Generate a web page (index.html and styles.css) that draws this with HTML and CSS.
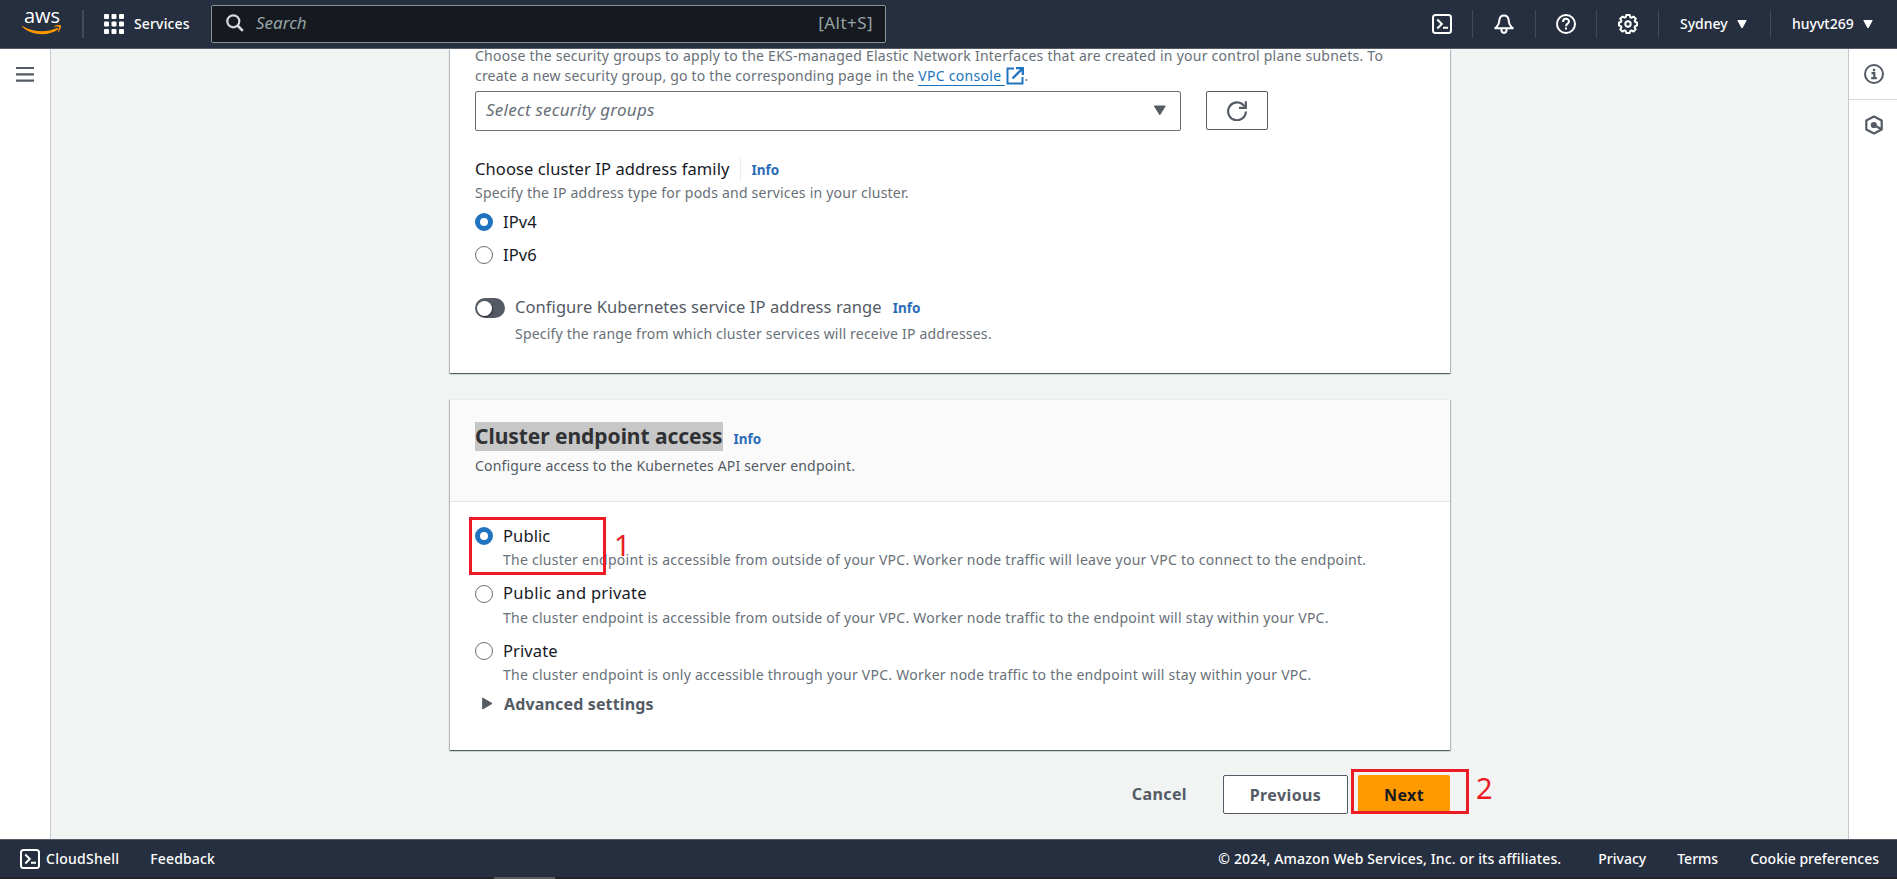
FILE: index.html
```html
<!DOCTYPE html>
<html lang="en">
<head>
<meta charset="utf-8">
<title>Configure cluster networking</title>
<link rel="stylesheet" href="styles.css">
</head>
<body>
<header class="topbar">
  <div class="logo">
    <span class="logo-text">aws</span>
    <svg class="logo-smile" viewBox="0 0 40 11" width="40" height="11"><path d="M0.6 1.2C11 7 24 8 34.5 3.2c1.4-.6 2.2.7 1 1.6C26 11.400 10 10.700.3 2c-.5-.5-.2-1.100.3-.8z" fill="#f90"/><path d="M31.800 1.400C34.300-.2 38.300-.2 38.800.5c.5.800-.3 4.300-2.400 6.400-.3.300-.7.200-.5-.3.500-1.200 1.500-3.900 1-4.600-.5-.700-3.300-.4-4.700-.2-.5 0-.7-.1-.4-.4z" fill="#f90"/></svg>
  </div>
  <span class="bar-line logo-line"></span>
  <div class="services">
    <svg width="20" height="20" viewBox="0 0 20 20" fill="#fff"><rect width="5" height="5" rx="1"/><rect x="7.500" width="5" height="5" rx="1"/><rect x="15" width="5" height="5" rx="1"/><rect y="7.500" width="5" height="5" rx="1"/><rect x="7.500" y="7.500" width="5" height="5" rx="1"/><rect x="15" y="7.500" width="5" height="5" rx="1"/><rect y="15" width="5" height="5" rx="1"/><rect x="7.500" y="15" width="5" height="5" rx="1"/><rect x="15" y="15" width="5" height="5" rx="1"/></svg>
    <span class="bar-text">Services</span>
  </div>
  <div class="search">
    <svg width="18" height="18" viewBox="0 0 18 18" fill="none" stroke="#d5dbdb" stroke-width="2.200"><circle cx="7.300" cy="7.300" r="6"/><path d="M11.500 11.500 16.800 16.800" stroke-width="2.600"/></svg>
    <span class="search-hint">Search</span>
    <span class="search-key">[Alt+S]</span>
  </div>
  <nav class="tools">
    <span class="tool t1"><svg width="20" height="20" viewBox="0 0 20 20" fill="none" stroke="#fff" stroke-width="2"><rect x="1" y="1" width="18" height="18" rx="2.500"/><path d="M5.300 5.500 9.800 10l-4.500 4.500M11 13.800h5"/></svg></span>
    <span class="tool t2"><svg width="20" height="20" viewBox="0 0 20 20" fill="none" stroke="#fff" stroke-width="2" stroke-linejoin="round"><path d="M1.200 14.200C4 12 5 10 5.300 6.500 5.600 3 7.500 1.500 10 1.500s4.400 1.500 4.700 5c.3 3.500 1.300 5.500 4.100 7.700z"/><path d="M7.300 15c0 5.200 5.400 5.200 5.400 0"/></svg></span>
    <span class="tool t3"><svg width="20" height="20" viewBox="0 0 20 20" fill="none" stroke="#fff" stroke-width="2"><circle cx="10" cy="10" r="9"/><path d="M7 8c0-4.200 6-4 6-.6 0 2.300-3 2.200-3 4.900M10 13.500v2"/></svg></span>
    <span class="tool t4"><svg width="20" height="20" viewBox="0 0 20 20" fill="none" stroke="#fff" stroke-width="2" stroke-linejoin="round"><path d="M8.300 1h3.400l.6 2.200 1.300.5 2-1.100 2.200 2.200-1.100 2 .5 1.200 1.800.5v3.100l-1.900.6-.5 1.200 1.100 2-2.200 2.100-2-1-1.200.4-.6 2.100H8.300l-.6-2.100-1.200-.5-2.100 1.100-2.200-2.100 1.200-2-.5-1.300L1 11.600V8.500L2.900 8l.5-1.200-1.200-2 2.200-2.200 2.100 1.100 1.200-.5z"/><circle cx="10" cy="10" r="2.700"/></svg></span>
    <span class="tool t5"><span class="bar-text">Sydney</span><svg width="10" height="9" viewBox="0 0 10 9"><path d="M.8.500h8.400L5 8z" fill="#fff" stroke="#fff" stroke-linejoin="round"/></svg></span>
    <span class="tool t6"><span class="bar-text user">huyvt269</span><svg width="10" height="9" viewBox="0 0 10 9"><path d="M.8.500h8.400L5 8z" fill="#fff" stroke="#fff" stroke-linejoin="round"/></svg></span>
  </nav>
</header>

<div class="body">
  <aside class="rail rail-left">
    <svg width="18" height="17" viewBox="0 0 18 17" stroke="#545b64" stroke-width="2.200"><path d="M0 2h18M0 8.300h18M0 14.600h18"/></svg>
  </aside>
  <main class="main">
    <section class="card card-net">
      <p class="hint groups-hint"><span class="g1">Choose the security groups to apply to the EKS-managed Elastic Network Interfaces that are created in your control plane subnets. To</span><br><span class="g2">create a new security group, go to the corresponding page in the </span><a class="link">VPC console</a><svg class="ext" width="18" height="18" viewBox="0 0 18 18" fill="none" stroke="#2074bf" stroke-width="2"><path d="M8 1.500H1.500v15h15V10"/><path d="M10 1.200h6.800V8M16.500 1.500 6.500 11.500" stroke-width="2.300"/></svg>.</p>
      <div class="select-row">
        <div class="select"><span class="placeholder">Select security groups</span><svg width="14" height="11" viewBox="0 0 14 11"><path d="M1.300 1h11L6.800 9.800z" fill="#545b64" stroke="#545b64" stroke-linejoin="round"/></svg></div>
        <div class="btn refresh"><svg width="21" height="20" viewBox="0 0 21 20" fill="none" stroke="#545b64" stroke-width="2.200"><path d="M17.500 5.500A8.900 8.900 0 1 0 18.900 10.500"/><path d="M18.800.3v6.500H12"/></svg></div>
      </div>
      <div class="label-row family"><span class="label">Choose cluster IP address family</span><span class="info split">Info</span></div>
      <p class="hint family-hint">Specify the IP address type for pods and services in your cluster.</p>
      <div class="option o-v4"><i class="radio on"></i><span class="label ip">IPv4</span></div>
      <div class="option o-v6"><i class="radio"></i><span class="label ip">IPv6</span></div>
      <div class="toggle-row"><i class="toggle"></i><span class="label range">Configure Kubernetes service IP address range</span><span class="info">Info</span></div>
      <p class="hint range-hint">Specify the range from which cluster services will receive IP addresses.</p>
    </section>

    <section class="card card-access">
      <div class="card-head">
        <div class="head-row"><h2 class="title">Cluster endpoint access</h2><span class="info">Info</span></div>
        <p class="hint head-hint">Configure access to the Kubernetes API server endpoint.</p>
      </div>
      <div class="choices">
        <div class="choice">
          <div class="option"><i class="radio on"></i><span class="label c1">Public</span></div>
          <p class="hint h1">The cluster endpoint is accessible from outside of your VPC. Worker node traffic will leave your VPC to connect to the endpoint.</p>
          <span class="mark mark-one"></span><span class="mark-no no-one">1</span>
        </div>
        <div class="choice">
          <div class="option"><i class="radio"></i><span class="label c2">Public and private</span></div>
          <p class="hint h2">The cluster endpoint is accessible from outside of your VPC. Worker node traffic to the endpoint will stay within your VPC.</p>
        </div>
        <div class="choice">
          <div class="option"><i class="radio"></i><span class="label c3">Private</span></div>
          <p class="hint h3">The cluster endpoint is only accessible through your VPC. Worker node traffic to the endpoint will stay within your VPC.</p>
        </div>
      </div>
      <div class="advanced"><svg width="11" height="13" viewBox="0 0 11 13"><path d="M.7 1v11l9.300-5.500z" fill="#545b64" stroke="#545b64" stroke-linejoin="round"/></svg><span>Advanced settings</span></div>
    </section>

    <div class="actions">
      <span class="cancel">Cancel</span>
      <span class="btn previous"><span>Previous</span></span>
      <span class="next"><span>Next</span><span class="mark mark-two"></span><span class="mark-no no-two">2</span></span>
    </div>
  </main>
  <aside class="rail rail-right">
    <div class="rail-cell"><svg width="20" height="20" viewBox="0 0 20 20" fill="none" stroke="#545b64" stroke-width="2"><circle cx="10" cy="10" r="9"/><path d="M10 4.800v2.400M7.500 9.200H10.300v4.800M7.200 14.200h5.600" stroke-width="2.200"/></svg></div>
    <div class="rail-cell second"><svg width="20" height="20" viewBox="0 0 20 20" fill="none" stroke="#545b64" stroke-width="2.200"><path d="M10 1.500 17.700 5.500v9L10 18.500 2.300 14.500v-9z" stroke-linejoin="round"/><circle cx="9.800" cy="10" r="2" fill="#545b64"/><path d="M10 10l7 4" stroke-width="2.400"/></svg></div>
  </aside>
</div>

<footer class="footer">
  <svg width="20" height="20" viewBox="0 0 20 20" fill="none" stroke="#fff" stroke-width="2"><rect x="1" y="1" width="18" height="18" rx="2.500"/><path d="M5.300 5.500 9.800 10l-4.500 4.500M11 13.800h5"/></svg>
  <span class="f-shell">CloudShell</span>
  <span class="f-feed">Feedback</span>
  <span class="f-copy">© 2024, Amazon Web Services, Inc. or its affiliates.</span>
  <span class="f-priv">Privacy</span>
  <span class="f-terms">Terms</span>
  <span class="f-cookie">Cookie preferences</span>
</footer>
<div class="strip"><i></i></div>
</body>
</html>
```
FILE: styles.css
```css
* { box-sizing: border-box; }
body { margin: 0; width: 1897px; height: 879px; overflow: hidden; display: flex; flex-direction: column; background: #f2f3f3; color: #16191f; font-family: "Noto Sans", "Open Sans", sans-serif; white-space: nowrap; }
p, h2 { margin: 0; }
svg { display: block; flex: none; }

.topbar { height: 49px; flex: none; display: flex; align-items: center; background: #262f3f; border-bottom: 1px solid #545b64; color: #fff; }
.logo { width: 40px; height: 28px; margin-left: 22px; display: flex; flex-direction: column; align-items: center; }
.logo-text { height: 16px; font: 500 20px/11px "Open Sans", sans-serif; letter-spacing: 0; }
.logo-smile { margin-top: -1px; }
.bar-line { width: 2px; height: 28px; margin-left: 20px; background: #464b54; }
.services { display: flex; align-items: center; width: 107px; margin-left: 20px; gap: 10px; }
.bar-text { font-size: 14px; font-weight: 500; line-height: 20px; }
.services .bar-text { letter-spacing: 0.15px; }
.search { width: 675px; height: 38px; display: flex; align-items: center; padding: 0 12px 2px 14px; border: 1px solid #879596; border-radius: 2px; background: #16191f; color: #95a5a6; font-size: 17px; line-height: 22px; }
.search-hint { margin-left: 12px; flex: 1; font-style: italic; }
.search-key { letter-spacing: 0.45px; }
.tools { display: flex; margin-left: auto; height: 28px; }
.tool { display: flex; align-items: center; border-left: 1px solid #414955; gap: 9px; }
.t1 { width: 40px; border: 0; }
.t2 { width: 63px; padding-left: 21px; }
.t3 { width: 61px; padding-left: 20px; }
.t4 { width: 62px; padding-left: 21px; }
.t5 { width: 112px; padding-left: 21px; }
.t6 { width: 127px; padding-left: 21px; }

.body { flex: 1; display: flex; min-height: 0; }
.rail { width: 51px; flex: none; background: #fff; }
.rail-left { border-right: 1px solid #c6cacc; padding: 17px 16px 0; }
.rail-right { width: 49px; border-left: 1px solid #c6cacc; }
.rail-cell { height: 51px; padding: 15px 0 0 15px; border-bottom: 1px solid #d5dbdb; }
.second { border: 0; }
.main { flex: 1; display: flow-root; padding-left: 399px; }
.card { display: flow-root; width: 1000px; background: #fff; box-shadow: 0 1px 1px 0 rgba(0,28,36,.5), 1px 1px 1px 0 rgba(0,28,36,.2), -1px 1px 1px 0 rgba(0,28,36,.2); }
.card-net { height: 324px; padding-left: 25px; }
.hint { font-size: 14px; line-height: 20px; color: #687078; letter-spacing: 0.25px; }
.g2 { letter-spacing: 0.2px; }
.groups-hint { height: 42px; margin-top: -3px; }
.link { color: #2074bf; border-bottom: 1px solid #2074bf; padding-right: 4px; letter-spacing: 0.3px; }
.ext { display: inline-block; vertical-align: -4px; margin-left: 1px; }
.select-row { display: flex; gap: 25px; margin-top: 3px; }
.select { width: 706px; height: 40px; border: 1px solid #687078; border-radius: 2px; display: flex; align-items: center; justify-content: space-between; padding: 0 13px 1px 10px; }
.placeholder { font-size: 17px; font-style: italic; line-height: 22px; color: #687078; letter-spacing: 0.25px; margin-top: -2px; }
.btn { border: 1px solid #545b64; border-radius: 2px; background: #fff; display: flex; align-items: center; justify-content: center; }
.refresh { width: 62px; height: 39px; }
.label-row { display: flex; align-items: center; height: 22px; margin-top: 27px; }
.label { font-size: 16.500px; line-height: 22px; letter-spacing: 0.1px; }
.info { font-size: 13.500px; font-weight: 700; line-height: 22px; color: #2b6cb8; padding-top: 2px; margin-left: 11px; }
.split { border-left: 1px solid #eaeded; margin-left: 10px; padding-left: 11px; }
.family-hint { margin-top: 3px; letter-spacing: 0.22px; }
.option { display: flex; align-items: center; height: 22px; gap: 10px; }
.option .label { margin-top: -1px; }
.radio { width: 18px; height: 18px; flex: none; border: 1px solid #687078; border-radius: 50%; background: #fff; }
.radio.on { border: 5px solid #2074bf; }
.o-v4 { margin-top: 8px; }
.o-v6 { margin-top: 11px; }
.toggle-row { display: flex; align-items: center; height: 22px; margin-top: 31px; }
.toggle { width: 30px; height: 20px; border-radius: 10px; background: #545b64; margin-right: 10px; padding: 3px 2px; }
.toggle::before { content: ""; display: block; width: 15px; height: 15px; border-radius: 50%; background: #fff; box-shadow: 1px 1px 2px rgba(0,0,0,.5); }
.range { color: #545b64; margin-top: -3px; letter-spacing: 0.07px; }
.toggle-row .info { margin-top: -3px; }
.range-hint { margin: 5px 0 0 40px; letter-spacing: 0.2px; }

.card-access { height: 351px; margin-top: 26px; border-top: 1px solid #eaeded; }
.card-head { height: 102px; padding: 22px 0 0 25px; background: #fafafa; border-bottom: 1px solid #e3e6e6; }
.head-row { display: flex; height: 29px; align-items: center; }
.title { height: 29px; font-size: 21px; line-height: 29px; font-weight: 700; letter-spacing: -0.05px; color: #2f3134; background: #c7c7c7; }
.head-row .info { padding-top: 5px; }
.head-hint { color: #545b64; margin-top: 5px; letter-spacing: 0.17px; }
.choices { padding: 23px 0 0 25px; }
.choice { position: relative; height: 57.500px; }
.choice .hint { margin: 3px 0 0 28px; }
.c2 { letter-spacing: 0.27px; }
.mark { position: absolute; border: 3px solid #ed1c24; }
.mark-one { left: -6px; top: -8px; width: 137px; height: 58px; }
.mark-no { position: absolute; color: #ed1c24; font-size: 29px; line-height: 30px; font-weight: 400; }
.no-one { left: 139px; top: 5px; }
.advanced { display: flex; align-items: center; gap: 11px; height: 22px; margin: -5px 0 0 32px; color: #545b64; font-size: 16px; font-weight: 700; letter-spacing: 0.15px; }

.actions { width: 1000px; display: flex; justify-content: flex-end; margin-top: 25px; font-size: 16px; line-height: 22px; font-weight: 700; color: #545b64; letter-spacing: 0.4px; }
.cancel { margin: 8px 36px 0 0; }
.previous { width: 125px; height: 39px; margin-right: 10px; }
.next { position: relative; width: 92px; height: 39px; border-radius: 2px; background: #f90; color: #16191f; display: flex; align-items: center; justify-content: center; }
.mark-two { left: -7px; top: -6px; width: 118px; height: 45px; }
.no-two { left: 118px; top: -2px; }

.footer { height: 38px; flex: none; display: flex; align-items: center; background: #262f3f; border-top: 1px solid #545b64; color: #fff; font-size: 14px; font-weight: 500; line-height: 20px; padding: 0 18px 0 20px; }
.f-shell { margin-left: 6px; letter-spacing: 0.25px; }
.f-feed { margin-left: 31px; letter-spacing: 0.15px; }
.f-copy { margin-left: auto; letter-spacing: 0.15px; }
.f-priv { margin-left: 37px; }
.f-terms { margin-left: 31px; }
.f-cookie { margin-left: 32px; }
.strip { height: 2px; flex: none; background: #222426; padding-left: 494px; }
.strip i { display: block; width: 61px; height: 2px; background: #5b5b5b; }
```
